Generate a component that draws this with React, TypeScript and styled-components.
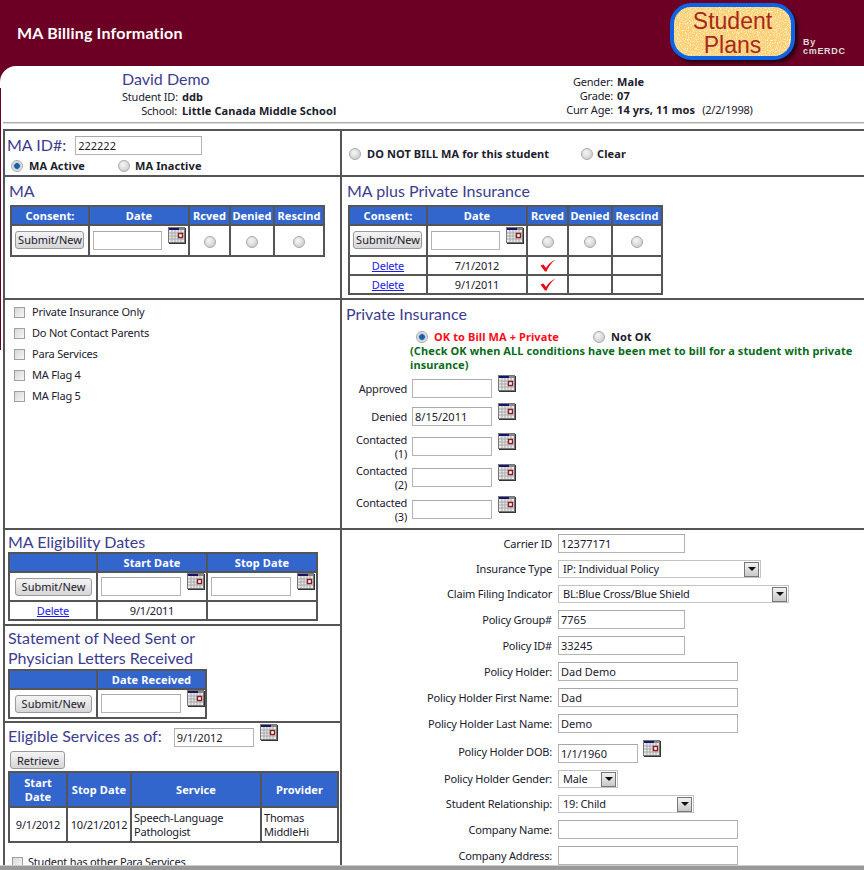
import React from 'react';
import styled, { createGlobalStyle } from 'styled-components';

const GlobalStyle = createGlobalStyle`
  html, body {
    margin: 0;
    padding: 0;
    background: #fff;
  }
  * {
    box-sizing: border-box;
  }
`;

const BODY_FONT = '"Noto Sans", "Liberation Sans", Arial, sans-serif';
const HEAD_FONT = 'Lato, "Noto Sans", sans-serif';
const LINE = '#555';

const Frame = styled.div`
  position: relative;
  width: 864px;
  height: 870px;
  overflow: hidden;
  background: #6b0024;
  font: 11px/14px ${BODY_FONT};
  letter-spacing: -0.2px;
  color: #20202c;
`;

const Header = styled.header`
  display: flex;
  height: 66px;
  padding: 3px 0 0 17px;
`;

const PageTitle = styled.h1`
  flex: 1;
  margin: 21px 0 0;
  font: bold 16px/18px ${HEAD_FONT};
  letter-spacing: 0.2px;
  color: #fff;
`;

const Logo = styled.div`
  position: relative;
  width: 125px;
  height: 57px;
  overflow: hidden;
  border: 4px solid #0d62e6;
  border-radius: 21px;
  background: #fbcf72;
  box-shadow: 3px 3px 3px #2d0010;
  text-align: center;
  font: 23px/24px "Liberation Sans", Arial, sans-serif;
  letter-spacing: 0;
  color: #a8281c;
`;

const LogoGrain = styled.svg`
  position: absolute;
  inset: 0;
  width: 100%;
  height: 100%;
`;

const LogoText = styled.div`
  position: relative;
  padding-top: 2px;
`;

const ByLine = styled.div`
  width: 69px;
  padding: 35px 0 0 8px;
  font: bold 9px/9px "Liberation Sans", Arial, sans-serif;
  letter-spacing: 0.7px;
  color: #ddd;
`;

const Content = styled.main`
  height: 804px;
  background: #fff;
  border-top-left-radius: 16px;
`;

const LeftEdge = styled.div`
  position: absolute;
  left: 0;
  top: 88px;
  width: 1px;
  height: 262px;
  background: #6b0024;
`;

const StudentBar = styled.section`
  display: flex;
  height: 57px;
  margin-left: 3px;
  border-bottom: 1px solid #aaa;
  box-shadow: 0 1px 0 #ddd;
`;

const StudentLeft = styled.div`
  display: grid;
  grid-template-columns: 55px auto;
  column-gap: 5px;
  align-content: start;
  width: 561px;
  padding: 3px 0 0 119px;
`;

const StudentRight = styled.div`
  display: grid;
  grid-template-columns: 49px auto;
  column-gap: 4px;
  align-content: start;
  padding-top: 9px;
`;

const StudentName = styled.div`
  grid-column: 1 / 3;
  margin-bottom: 1px;
  font: 16px/20px ${HEAD_FONT};
  letter-spacing: 0;
  color: #3c3c8e;
`;

const InfoLabel = styled.span`
  text-align: right;
  white-space: nowrap;
`;

const InfoValue = styled.span`
  white-space: nowrap;
  font-weight: bold;
  letter-spacing: 0.1px;

  small {
    margin-left: 7px;
    font-size: 11px;
    font-weight: normal;
    letter-spacing: -0.2px;
  }
`;

const Sheet = styled.div`
  width: 900px;
  margin: 6px 0 0 3px;
  border-top: 2px solid ${LINE};
  border-left: 2px solid ${LINE};
`;

const SheetRow = styled.div<{ $h: number }>`
  display: flex;
  height: ${(p) => p.$h}px;
  border-bottom: 2px solid ${LINE};
`;

const LeftCell = styled.div`
  flex: none;
  width: 337px;
  border-right: 2px solid ${LINE};
  overflow: hidden;
`;

const RightCell = styled.div`
  flex: 1;
  min-width: 0;
`;

const Block = styled.div<{ $h?: number }>`
  height: ${(p) => (p.$h ? `${p.$h}px` : 'auto')};
  border-bottom: ${(p) => (p.$h ? `2px solid ${LINE}` : 'none')};
`;

const Heading = styled.h2<{ $x?: number; $y?: number }>`
  margin: 0;
  padding: ${(p) => p.$y ?? 4}px 0 0 ${(p) => p.$x ?? 4}px;
  font: 16px/20px ${HEAD_FONT};
  letter-spacing: 0;
  color: #3c3c8e;
  white-space: nowrap;
`;

const IdLine = styled.div`
  display: flex;
  align-items: center;
  gap: 9px;
  padding: 4px 0 0 2px;
`;

const Choice = styled.div<{ $x: number; $y: number }>`
  display: flex;
  align-items: center;
  padding: ${(p) => p.$y}px 0 0 ${(p) => p.$x}px;
`;

const ChoiceLabel = styled.b<{ $color?: string; $w?: number; $gap?: number }>`
  flex: none;
  width: ${(p) => (p.$w ? `${p.$w}px` : 'auto')};
  margin-left: ${(p) => p.$gap ?? 6}px;
  letter-spacing: 0.1px;
  white-space: nowrap;
  color: ${(p) => p.$color ?? '#20202c'};
`;

const Radio = styled.input.attrs({ type: 'radio', readOnly: true })`
  flex: none;
  appearance: none;
  width: 12px;
  height: 12px;
  margin: 0;
  border: 1px solid #a9a9a9;
  border-radius: 50%;
  background: radial-gradient(circle at 40% 35%, #f6f6f6, #c4c4c4);

  &:checked {
    background: radial-gradient(circle, #1d5fa8 0 2.5px, #8fb2cf 3px, #e2e2e2 4px);
  }
`;

const CellRadio = styled(Radio)`
  display: block;
  margin: 2px auto 0;
`;

const Check = styled.input.attrs({ type: 'checkbox', readOnly: true })`
  flex: none;
  appearance: none;
  width: 11px;
  height: 11px;
  margin: 0;
  border: 1px solid #a0a0a0;
  background: linear-gradient(135deg, #d8d8d8, #f6f6f6);
`;

const TextBox = styled.input.attrs({ type: 'text', readOnly: true })<{ $w: number }>`
  flex: none;
  width: ${(p) => p.$w}px;
  height: 19px;
  margin: 0;
  padding: 0 2px;
  border: 1px solid #b4b4b4;
  border-top-color: #a8a8a8;
  outline: none;
  background: #fff;
  font: 11px ${BODY_FONT};
  color: #20202c;
`;

const GridTable = styled.table<{ $x: number; $y: number; $w: number }>`
  width: ${(p) => p.$w}px;
  margin: ${(p) => p.$y}px 0 0 ${(p) => p.$x}px;
  table-layout: fixed;
  border-collapse: collapse;
`;

const Th = styled.th<{ $w?: number; $tall?: boolean }>`
  width: ${(p) => (p.$w ? `${p.$w}px` : 'auto')};
  height: ${(p) => (p.$tall ? 35 : 19)}px;
  padding: 0;
  border: 2px solid ${LINE};
  background: #3366cc;
  font: bold 11px/14px ${BODY_FONT};
  letter-spacing: 0.1px;
  text-align: center;
  color: #fff;
`;

const Td = styled.td<{ $h?: number; $left?: boolean }>`
  height: ${(p) => p.$h ?? 19}px;
  padding: ${(p) => (p.$left ? '0 2px' : 0)};
  border: 2px solid ${LINE};
  font-size: 11px;
  text-align: ${(p) => (p.$left ? 'left' : 'center')};
  vertical-align: middle;
  white-space: ${(p) => (p.$left ? 'normal' : 'nowrap')};
`;

const DateCell = styled.div`
  display: flex;
  align-items: flex-start;
  gap: 6px;
  padding: 0 0 4px 3px;
`;

const FieldBox = styled.div`
  padding-top: 4px;
`;

const Button = styled.button<{ $w: number }>`
  display: block;
  width: ${(p) => p.$w}px;
  height: 18px;
  margin: 0 auto;
  padding: 0 0 0 1px;
  overflow: hidden;
  border: 1px solid #9a9a9a;
  border-radius: 3px;
  background: linear-gradient(#f4f4f4, #d6d6d6);
  font: 11px ${BODY_FONT};
  white-space: nowrap;
  color: #20202c;
`;

const ConsentButton = styled(Button)`
  margin: 0 0 2px 3px;
`;

const RetrieveButton = styled(Button)`
  margin: 4px 0 2px 5px;
`;

const DeleteLink = styled.a`
  color: #1a1ae6;
  text-decoration: underline;
`;

const FlagList = styled.div`
  display: flex;
  flex-direction: column;
  gap: 7px;
  padding: 5px 0 0 9px;
`;

const FlagRow = styled.label`
  display: flex;
  align-items: center;
  gap: 7px;
`;

const Notice = styled.div`
  width: 522px;
  padding-left: 68px;
  font-weight: bold;
  letter-spacing: 0.1px;
  color: #0b6b1c;
`;

const DateList = styled.div`
  display: flex;
  flex-direction: column;
  padding: 3px 0 0 4px;
`;

const DateRow = styled.div<{ $h: number }>`
  display: flex;
  gap: 5px;
  height: ${(p) => p.$h}px;
`;

const DateLabel = styled.div<{ $two?: boolean }>`
  width: 61px;
  padding-top: ${(p) => (p.$two ? 0 : 7)}px;
  text-align: right;
`;

const DateBox = styled.div`
  padding-top: 4px;
`;

const IconBox = styled.div`
  margin-left: 1px;
`;

const ServicesLine = styled.div`
  display: flex;
  align-items: flex-start;
  padding: 1px 0 0 3px;
`;

const ServicesInput = styled.div`
  margin: 4px 6px 0 12px;
`;

const OtherServices = styled.div`
  display: flex;
  align-items: center;
  gap: 5px;
  padding: 12px 0 0 7px;
`;

const PolicyForm = styled.div`
  display: grid;
  grid-template-columns: 210px auto;
  column-gap: 6px;
  row-gap: 7px;
  align-items: center;
  justify-items: start;
  padding-top: 4px;
`;

const PolicyLabel = styled.label`
  justify-self: end;
  white-space: nowrap;
`;

const DobField = styled.div`
  display: flex;
  align-items: flex-start;
  gap: 5px;
`;

const SelectBox = styled.div<{ $w: number }>`
  display: flex;
  align-items: center;
  justify-content: space-between;
  width: ${(p) => p.$w}px;
  height: 18px;
  padding: 0 1px 0 4px;
  border: 1px solid #c4c4c4;
  white-space: nowrap;
`;

const SelectArrow = styled.span`
  display: flex;
  align-items: center;
  justify-content: center;
  width: 15px;
  height: 15px;
  border: 1px solid #777;
  background: linear-gradient(#f2f2f2, #c8c8c8);
`;

const ScrollBand = styled.div`
  position: absolute;
  left: 0;
  right: 0;
  bottom: 0;
  height: 5px;
  border-top: 1px solid #ccc;
  background: #999;
`;

const Calendar = () => (
  <svg width="18" height="17" viewBox="0 0 18 17" style={{ display: 'block' }}>
    <rect x="0.5" y="0.5" width="16" height="15" fill="#e8e8e8" stroke="#777" />
    <rect x="1" y="1" width="10" height="2" fill="#16166e" />
    <rect x="11" y="1" width="5" height="2" fill="#888" />
    <path d="M4 3v12M7 3v12M10 3v12M13 3v12M1 6h15M1 9h15M1 12h15" stroke="#a9a9a9" strokeWidth="1" fill="none" />
    <rect x="10.5" y="6.5" width="4" height="4" fill="#fff" stroke="#8c1c24" strokeWidth="1.4" />
    <path d="M17.5 1v16M1 16.5h16" stroke="#333" strokeWidth="1" />
  </svg>
);

const Tick = () => (
  <svg width="16" height="13" viewBox="0 0 16 13" style={{ display: 'block', margin: '0 auto' }}>
    <path d="M0.5 6.5 L3.5 5.5 L6 9 C8 5.5 11 2.5 15.5 0.5 C11 4 8.5 8 6.5 12.5 L5 12.5 Z" fill="#e60c12" />
  </svg>
);

const Arrow = () => (
  <svg width="8" height="4" viewBox="0 0 8 4">
    <path d="M0 0h8L4 4z" fill="#111" />
  </svg>
);

const DatePicker = ({ w = 80 }: { w?: number }) => (
  <DateCell>
    <FieldBox>
      <TextBox $w={w} defaultValue="" />
    </FieldBox>
    <Calendar />
  </DateCell>
);

const ConsentHead = () => (
  <thead>
    <tr>
      <Th $w={78}>Consent:</Th>
      <Th $w={100}>Date</Th>
      <Th $w={41}>Rcved</Th>
      <Th $w={44}>Denied</Th>
      <Th>Rescind</Th>
    </tr>
  </thead>
);

const ConsentEntry = () => (
  <tr>
    <Td $h={31}>
      <ConsentButton $w={69}>Submit/New</ConsentButton>
    </Td>
    <Td $h={31}>
      <DatePicker w={69} />
    </Td>
    <Td $h={31}>
      <CellRadio />
    </Td>
    <Td $h={31}>
      <CellRadio />
    </Td>
    <Td $h={31}>
      <CellRadio />
    </Td>
  </tr>
);

const ConsentRecord = ({ date }: { date: string }) => (
  <tr>
    <Td>
      <DeleteLink href="#">Delete</DeleteLink>
    </Td>
    <Td>{date}</Td>
    <Td>
      <Tick />
    </Td>
    <Td />
    <Td />
  </tr>
);

const DateEntry = ({ label, value, h, two }: { label: React.ReactNode; value?: string; h: number; two?: boolean }) => (
  <DateRow $h={h}>
    <DateLabel $two={two}>{label}</DateLabel>
    <DateBox>
      <TextBox $w={80} defaultValue={value ?? ''} />
    </DateBox>
    <IconBox>
      <Calendar />
    </IconBox>
  </DateRow>
);

const Select = ({ w, children }: { w: number; children: React.ReactNode }) => (
  <SelectBox $w={w}>
    {children}
    <SelectArrow>
      <Arrow />
    </SelectArrow>
  </SelectBox>
);

const flags = ['Private Insurance Only', 'Do Not Contact Parents', 'Para Services', 'MA Flag 4', 'MA Flag 5'];

const App = () => (
  <>
    <GlobalStyle />
    <Frame>
      <Header>
        <PageTitle>MA Billing Information</PageTitle>
        <Logo>
          <LogoGrain aria-hidden="true">
            <filter id="grain">
              <feTurbulence type="fractalNoise" baseFrequency="0.9" numOctaves="2" seed="4" />
              <feColorMatrix values="0 0 0 0 1  0 0 0 0 0.95  0 0 0 0 0.78  0 0 0 3 -1.4" />
            </filter>
            <rect width="100%" height="100%" filter="url(#grain)" />
          </LogoGrain>
          <LogoText>
            Student
            <br />
            Plans
          </LogoText>
        </Logo>
        <ByLine>
          By
          <br />
          cmERDC
        </ByLine>
      </Header>
      <Content>
        <StudentBar>
          <StudentLeft>
            <StudentName>David Demo</StudentName>
            <InfoLabel>Student ID:</InfoLabel>
            <InfoValue>ddb</InfoValue>
            <InfoLabel>School:</InfoLabel>
            <InfoValue>Little Canada Middle School</InfoValue>
          </StudentLeft>
          <StudentRight>
            <InfoLabel>Gender:</InfoLabel>
            <InfoValue>Male</InfoValue>
            <InfoLabel>Grade:</InfoLabel>
            <InfoValue>07</InfoValue>
            <InfoLabel>Curr Age:</InfoLabel>
            <InfoValue>
              14 yrs, 11 mos<small>(2/2/1998)</small>
            </InfoValue>
          </StudentRight>
        </StudentBar>
        <Sheet>
          <SheetRow $h={46}>
            <LeftCell>
              <IdLine>
                <Heading as="span" $x={0} $y={0}>
                  MA ID#:
                </Heading>
                <TextBox $w={127} defaultValue="222222" />
              </IdLine>
              <Choice $x={6} $y={4}>
                <Radio defaultChecked />
                <ChoiceLabel $w={89}>MA Active</ChoiceLabel>
                <Radio />
                <ChoiceLabel $gap={5}>MA Inactive</ChoiceLabel>
              </Choice>
            </LeftCell>
            <RightCell>
              <Choice $x={7} $y={16}>
                <Radio />
                <ChoiceLabel $w={214}>DO NOT BILL MA for this student</ChoiceLabel>
                <Radio />
                <ChoiceLabel $gap={4}>Clear</ChoiceLabel>
              </Choice>
            </RightCell>
          </SheetRow>
          <SheetRow $h={123}>
            <LeftCell>
              <Heading>MA</Heading>
              <GridTable $x={5} $y={4} $w={315}>
                <ConsentHead />
                <tbody>
                  <ConsentEntry />
                </tbody>
              </GridTable>
            </LeftCell>
            <RightCell>
              <Heading $x={5}>MA plus Private Insurance</Heading>
              <GridTable $x={6} $y={4} $w={315}>
                <ConsentHead />
                <tbody>
                  <ConsentEntry />
                  <ConsentRecord date="7/1/2012" />
                  <ConsentRecord date="9/1/2011" />
                </tbody>
              </GridTable>
            </RightCell>
          </SheetRow>
          <SheetRow $h={230}>
            <LeftCell>
              <FlagList>
                {flags.map((flag) => (
                  <FlagRow key={flag}>
                    <Check />
                    {flag}
                  </FlagRow>
                ))}
              </FlagList>
            </LeftCell>
            <RightCell>
              <Heading $x={4} $y={4}>
                Private Insurance
              </Heading>
              <Choice $x={74} $y={6}>
                <Radio defaultChecked />
                <ChoiceLabel $color="#ff0c18" $w={159}>
                  OK to Bill MA + Private
                </ChoiceLabel>
                <Radio />
                <ChoiceLabel>Not OK</ChoiceLabel>
              </Choice>
              <Notice>(Check OK when ALL conditions have been met to bill for a student with private insurance)</Notice>
              <DateList>
                <DateEntry label="Approved" h={28} />
                <DateEntry label="Denied" value="8/15/2011" h={30} />
                <DateEntry
                  two
                  h={31}
                  label={
                    <>
                      Contacted
                      <br />
                      (1)
                    </>
                  }
                />
                <DateEntry
                  two
                  h={32}
                  label={
                    <>
                      Contacted
                      <br />
                      (2)
                    </>
                  }
                />
                <DateEntry
                  two
                  h={32}
                  label={
                    <>
                      Contacted
                      <br />
                      (3)
                    </>
                  }
                />
              </DateList>
            </RightCell>
          </SheetRow>
          <SheetRow $h={400}>
            <LeftCell>
              <Block $h={96}>
                <Heading $x={3} $y={2}>
                  MA Eligibility Dates
                </Heading>
                <GridTable $x={3} $y={0} $w={310}>
                  <thead>
                    <tr>
                      <Th $w={88} />
                      <Th $w={110}>Start Date</Th>
                      <Th>Stop Date</Th>
                    </tr>
                  </thead>
                  <tbody>
                    <tr>
                      <Td $h={29}>
                        <Button $w={77}>Submit/New</Button>
                      </Td>
                      <Td $h={29}>
                        <DatePicker />
                      </Td>
                      <Td $h={29}>
                        <DatePicker />
                      </Td>
                    </tr>
                    <tr>
                      <Td>
                        <DeleteLink href="#">Delete</DeleteLink>
                      </Td>
                      <Td>9/1/2011</Td>
                      <Td />
                    </tr>
                  </tbody>
                </GridTable>
              </Block>
              <Block $h={97}>
                <Heading $x={3} $y={2}>
                  Statement of Need Sent or
                  <br />
                  Physician Letters Received
                </Heading>
                <GridTable $x={3} $y={1} $w={199}>
                  <thead>
                    <tr>
                      <Th $w={88} />
                      <Th>Date Received</Th>
                    </tr>
                  </thead>
                  <tbody>
                    <tr>
                      <Td $h={29}>
                        <Button $w={77}>Submit/New</Button>
                      </Td>
                      <Td $h={29}>
                        <DatePicker />
                      </Td>
                    </tr>
                  </tbody>
                </GridTable>
              </Block>
              <Block>
                <ServicesLine>
                  <Heading as="span" $x={0} $y={2}>
                    Eligible Services as of:
                  </Heading>
                  <ServicesInput>
                    <TextBox $w={80} defaultValue="9/1/2012" />
                  </ServicesInput>
                  <Calendar />
                </ServicesLine>
                <RetrieveButton $w={55}>Retrieve</RetrieveButton>
                <GridTable $x={3} $y={0} $w={331}>
                  <thead>
                    <tr>
                      <Th $w={58} $tall>
                        Start
                        <br />
                        Date
                      </Th>
                      <Th $w={64} $tall>
                        Stop Date
                      </Th>
                      <Th $w={130} $tall>
                        Service
                      </Th>
                      <Th $tall>Provider</Th>
                    </tr>
                  </thead>
                  <tbody>
                    <tr>
                      <Td $h={35}>9/1/2012</Td>
                      <Td $h={35}>10/21/2012</Td>
                      <Td $h={35} $left>
                        Speech-Language Pathologist
                      </Td>
                      <Td $h={35} $left>
                        Thomas MiddleHi
                      </Td>
                    </tr>
                  </tbody>
                </GridTable>
                <OtherServices>
                  <Check />
                  Student has other Para Services
                </OtherServices>
              </Block>
            </LeftCell>
            <RightCell>
              <PolicyForm>
                <PolicyLabel>Carrier ID</PolicyLabel>
                <TextBox $w={127} defaultValue="12377171" />
                <PolicyLabel>Insurance Type</PolicyLabel>
                <Select w={203}>IP: Individual Policy</Select>
                <PolicyLabel>Claim Filing Indicator</PolicyLabel>
                <Select w={231}>BL:Blue Cross/Blue Shield</Select>
                <PolicyLabel>Policy Group#</PolicyLabel>
                <TextBox $w={127} defaultValue="7765" />
                <PolicyLabel>Policy ID#</PolicyLabel>
                <TextBox $w={127} defaultValue="33245" />
                <PolicyLabel>Policy Holder:</PolicyLabel>
                <TextBox $w={180} defaultValue="Dad Demo" />
                <PolicyLabel>Policy Holder First Name:</PolicyLabel>
                <TextBox $w={180} defaultValue="Dad" />
                <PolicyLabel>Policy Holder Last Name:</PolicyLabel>
                <TextBox $w={180} defaultValue="Demo" />
                <PolicyLabel>Policy Holder DOB:</PolicyLabel>
                <DobField>
                  <FieldBox>
                    <TextBox $w={80} defaultValue="1/1/1960" />
                  </FieldBox>
                  <Calendar />
                </DobField>
                <PolicyLabel>Policy Holder Gender:</PolicyLabel>
                <Select w={60}>Male</Select>
                <PolicyLabel>Student Relationship:</PolicyLabel>
                <Select w={136}>19: Child</Select>
                <PolicyLabel>Company Name:</PolicyLabel>
                <TextBox $w={180} defaultValue="" />
                <PolicyLabel>Company Address:</PolicyLabel>
                <TextBox $w={180} defaultValue="" />
              </PolicyForm>
            </RightCell>
          </SheetRow>
        </Sheet>
      </Content>
      <LeftEdge />
      <ScrollBand />
    </Frame>
  </>
);

export default App;
